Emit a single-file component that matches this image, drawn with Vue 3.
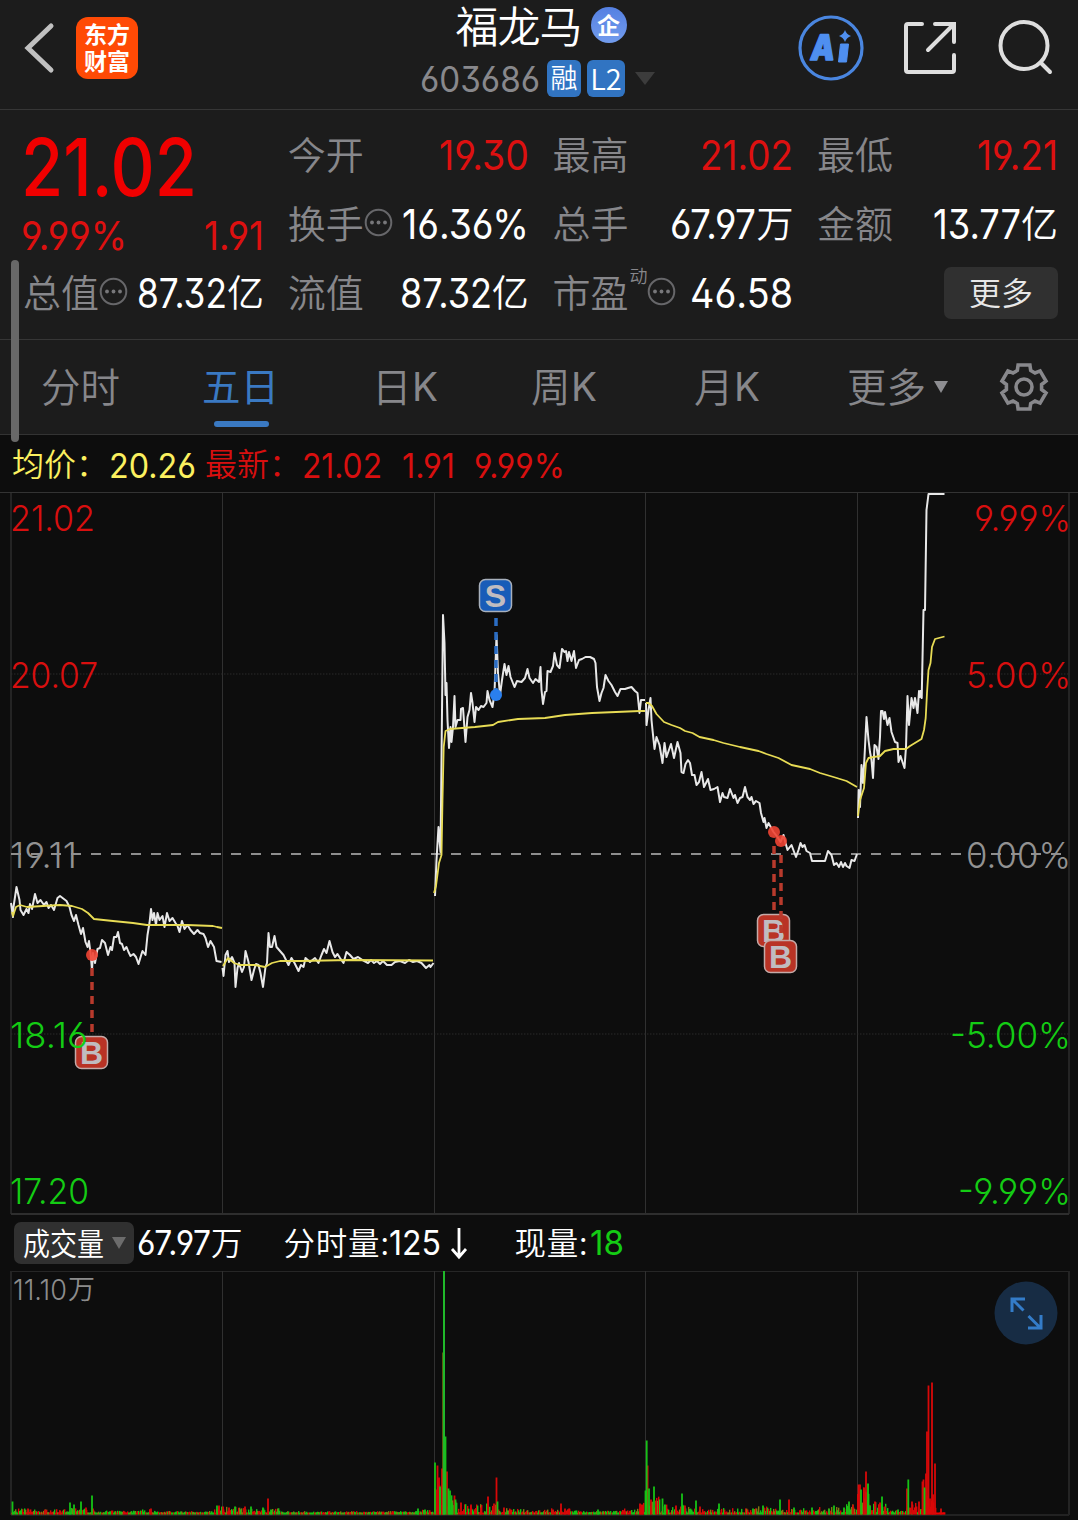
<template>
    <div class="page">
        <header class="header">
            <div class="header-left">
                <svg class="back" width="32" height="56" viewBox="0 0 32 56">
                    <path d="M27 6 L4 28 L27 50" />
                </svg>
                <div class="logo"><span>东方</span><span>财富</span></div>
            </div>
            <div class="title">
                <div class="title-name">
                    <span>福龙马</span>
                    <i class="company">企</i>
                </div>
                <div class="title-code">
                    <span class="num" v-fit="120">603686</span>
                    <span class="tag">融</span>
                    <span class="tag tag-l2">L2</span>
                    <svg width="20" height="14" viewBox="0 0 20 14"><path d="M0 0H20L10 13Z" fill="#3c3c3c" /></svg>
                </div>
            </div>
            <div class="header-right">
                <svg width="66" height="66" viewBox="0 0 66 66">
                    <circle cx="33" cy="33" r="31" fill="none" stroke="#4a86e0" stroke-width="3.2" />
                    <text class="ai" x="13" y="45.500" textLength="24" lengthAdjust="spacingAndGlyphs">A</text>
                    <path d="M42.500 29H50.500L48.500 47H40.500Z" fill="#4f8ff0" stroke="#4f8ff0" stroke-linejoin="round" />
                    <path d="M47 15Q48.500 19.500 53 21Q48.500 22.500 47 27Q45.500 22.500 41 21Q45.500 19.500 47 15Z" fill="#4f8ff0" />
                </svg>
                <svg class="line-icon" width="56" height="56" viewBox="0 0 56 56">
                    <path d="M20 4H6Q4 4 4 6V50Q4 52 6 52H50Q52 52 52 50V35M33 4H52V22M51 5L26 30" />
                </svg>
                <svg class="line-icon" width="58" height="58" viewBox="0 0 58 58">
                    <circle cx="28" cy="26.500" r="23.500" />
                    <path d="M44.500 43.500L54 53" />
                </svg>
            </div>
        </header>

        <section class="quote">
            <div class="price">
                <div class="price-big num" v-fit="176">21.02</div>
                <div class="price-diff">
                    <span class="num" v-fit="106">9.99%</span>
                    <span class="num" v-fit="60">1.91</span>
                </div>
            </div>
            <div v-for="item in quotes" :key="item.label" class="cell">
                <span class="cell-label">{{ item.label }}</span>
                <sup v-if="item.sup">{{ item.sup }}</sup>
                <svg v-if="item.tip" class="tip" :class="{ 'tip-sup': item.sup }" width="29" height="29" viewBox="0 0 29 29">
                    <circle cx="14.500" cy="14.500" r="12.800" fill="none" stroke="#67676a" stroke-width="2" />
                    <circle v-for="x in [8, 14.5, 21]" :key="x" :cx="x" cy="14.500" r="1.900" fill="#77777a" />
                </svg>
                <span class="cell-value" :class="{ up: item.up }">
                    <span class="num" v-fit="item.width">{{ item.value }}</span>
                    <span v-if="item.unit" class="unit">{{ item.unit }}</span>
                </span>
            </div>
            <button class="more">更多</button>
        </section>

        <nav class="tabs">
            <span
                v-for="tab in tabs"
                :key="tab.name"
                class="tab"
                :class="{ active: tab.name === '五日' }"
                :style="{ width: tab.width + 'px' }"
            >
                {{ tab.name }}<b v-if="tab.k" class="num" v-fit="26">K</b>
                <svg v-if="tab.arrow" width="14" height="12" viewBox="0 0 14 12"><path d="M0 0H14L7 12Z" /></svg>
            </span>
            <svg class="gear" width="50" height="50" viewBox="-25 -25 50 50">
                <path :d="gearPath" />
                <circle r="8" />
            </svg>
        </nav>

        <div class="info">
            <span class="info-label avg">均价：</span>
            <span class="num avg info-avg" v-fit="87">20.26</span>
            <span class="info-label">最新：</span>
            <span class="num info-last" v-fit="80">21.02</span>
            <span class="num info-diff" v-fit="53">1.91</span>
            <span class="num" v-fit="91">9.99%</span>
        </div>

        <svg class="chart" width="1078" height="723" viewBox="0 492 1078 723">
            <path d="M0 492.500H1078" stroke="#333" />
            <path d="M11 493V1214M1069 493V1214" stroke="#242424" stroke-width="2" />
            <path d="M222.500 493V1214M434.500 493V1214M645.500 493V1214M857.500 493V1214" stroke="#303030" />
            <path d="M11 1214H1069" stroke="#2e2e2e" stroke-width="2" />
            <path d="M11 674H1069M11 1034H1069" stroke="#2a2a2a" stroke-dasharray="1.500 1.500" />
            <path d="M11 854H1062" stroke="#8e8e8e" stroke-width="2" stroke-dasharray="10 10" />
            <polyline v-for="(line, i) in prices" :key="'p' + i" class="line-price" :points="line" />
            <polyline v-for="(line, i) in averages" :key="'a' + i" class="line-avg" :points="line" />
            <g v-for="m in marks" :key="m.x" :class="'mark-' + m.type">
                <path class="mark-line" :d="`M${m.x} ${m.from}V${m.to}`" />
                <circle :cx="m.x" :cy="m.dot" r="6" />
                <rect :x="m.bx" :y="m.by" width="32" height="32" rx="6" />
                <text :x="m.bx + 16" :y="m.by + 27.5" text-anchor="middle">{{ m.type }}</text>
            </g>
            <text
                v-for="a in axis"
                :key="a.text"
                class="axis"
                :x="a.x"
                :y="a.y"
                :fill="a.color"
                :textLength="a.w"
                lengthAdjust="spacingAndGlyphs"
            >{{ a.text }}</text>
        </svg>

        <div class="vol-bar">
            <span class="chip">
                <span class="chip-text" v-fit="81">成交量</span>
                <svg width="14" height="13" viewBox="0 0 14 13"><path d="M0 0H14L7 12Z" fill="#6c6c6c" /></svg>
            </span>
            <span class="num" v-fit="74">67.97</span>
            <span class="vol-unit">万</span>
            <span class="vol-label">分时量:</span>
            <span class="num" v-fit="52">125</span>
            <svg class="down" width="18" height="34" viewBox="0 0 18 34">
                <path d="M9 2V31M2 23L9 31L16 23" />
            </svg>
            <span class="vol-label now">现量:</span>
            <span class="num down-color" v-fit="34">18</span>
        </div>

        <div class="volume">
            <svg width="1078" height="249" viewBox="0 1271 1078 249">
                <path d="M11 1271.500H1069" stroke="#262626" />
                <path d="M11 1271V1515M1069 1271V1515" stroke="#242424" stroke-width="2" />
                <path d="M222.500 1271V1515M434.500 1271V1515M645.500 1271V1515M857.500 1271V1515" stroke="#303030" />
                <path d="M11 1515H1069" stroke="#222" stroke-width="2" />
                <rect
                    v-for="(b, i) in bars"
                    :key="i"
                    :x="b.x"
                    :y="1514.5 - b.h"
                    :width="b.w"
                    :height="b.h"
                    :fill="b.color"
                />
                <text class="vol-max" x="13" y="1300" textLength="54" lengthAdjust="spacingAndGlyphs">11.10</text>
                <text class="vol-max-unit" x="68" y="1299">万</text>
            </svg>
            <svg class="expand" width="64" height="64" viewBox="0 0 64 64">
                <circle cx="32" cy="32" r="31.500" />
                <path d="M18 31V18H31M19 19L29.500 29.500M34.500 35L46 46.500M47 34V47H34" />
            </svg>
        </div>

        <div class="scrollbar"></div>
    </div>
</template>

<script setup>
    // squeezes a piece of text to the given width and keeps the flow in step
    const vFit = {
        mounted(el, { value }) {
            el.style.display = 'inline-block'
            const natural = el.getBoundingClientRect().width
            el.style.transformOrigin = 'left center'
            el.style.transform = `scaleX(${value / natural})`
            el.style.marginRight = value - natural + (parseFloat(getComputedStyle(el).marginRight) || 0) + 'px'
        },
    }

    const quotes = [
        { label: '今开', value: '19.30', width: 90, up: true },
        { label: '最高', value: '21.02', width: 93, up: true },
        { label: '最低', value: '19.21', width: 81, up: true },
        { label: '换手', value: '16.36%', width: 127, tip: true },
        { label: '总手', value: '67.97', width: 86, unit: '万' },
        { label: '金额', value: '13.77', width: 88, unit: '亿' },
        { label: '总值', value: '87.32', width: 90, unit: '亿', tip: true },
        { label: '流值', value: '87.32', width: 92, unit: '亿' },
        { label: '市盈', value: '46.58', width: 103, sup: '动', tip: true },
    ]

    const tabs = [
        { name: '分时', width: 161 },
        { name: '五日', width: 170 },
        { name: '日', k: true, width: 159 },
        { name: '周', k: true, width: 163 },
        { name: '月', k: true, width: 153 },
        { name: '更多', arrow: true, width: 152 },
    ]

    const gearPath = (() => {
        const pts = []
        for (let i = 0; i < 6; i++) {
            const base = i * 60 - 90
            for (const [r, a] of [[17.8, -22], [22.8, -15], [22.8, 15], [17.8, 22]]) {
                const t = ((base + a) * Math.PI) / 180
                pts.push((r * Math.cos(t)).toFixed(1) + ' ' + (r * Math.sin(t)).toFixed(1))
            }
        }
        return 'M' + pts.join('L') + 'Z'
    })()

    const RED = '#d80f0f'
    const GREEN = '#14cc14'
    const GREY = '#929292'

    const axis = [
        { text: '21.02', x: 10, y: 531, w: 85, color: RED },
        { text: '20.07', x: 10, y: 688, w: 88, color: RED },
        { text: '19.11', x: 10, y: 868, w: 67, color: GREY },
        { text: '18.16', x: 10, y: 1048, w: 78, color: GREEN },
        { text: '17.20', x: 10, y: 1204, w: 79, color: GREEN },
        { text: '9.99%', x: 974, y: 531, w: 97, color: RED },
        { text: '5.00%', x: 966, y: 688, w: 105, color: RED },
        { text: '0.00%', x: 966, y: 868, w: 105, color: GREY },
        { text: '-5.00%', x: 950, y: 1048, w: 121, color: GREEN },
        { text: '-9.99%', x: 958, y: 1204, w: 113, color: GREEN },
    ]

    const marks = [
        { type: 'S', x: 496, from: 618, to: 692, dot: 695, bx: 479.5, by: 579.5 },
        { type: 'B', x: 92, from: 968, to: 1034, dot: 955, bx: 75.5, by: 1036.5 },
        { type: 'B', x: 774, from: 846, to: 912, dot: 832, bx: 757.5, by: 914.5 },
        { type: 'B', x: 781, from: 855, to: 938, dot: 841, bx: 764.5, by: 940.5 },
    ]

    const prices = [
        '11,903 13,917 13.5,907 16.5,887 19.5,900 20.5,910 23.5,915 26.5,909 28.5,913 30,904 32,909 35,894 37.5,903 40.5,900 44,905 46.5,902 48.5,908 51,905 54,910 57.5,898 60,896 66.5,901 69.5,907 71.5,915 74,921 76,915 78.5,925 81,934 83,928 85.5,942 87.5,947 89,941 90.5,953 92,970 93,953 95,963 97.5,949 100,948 102,940 105,943 108,955 110.5,947 112,950 114,937 116.5,937 118,932 120,943 122,944 124,950 126.5,947 128.5,952 130.5,956 133.5,954 136,957 138.5,964 141.5,954 142.5,951 145.5,955 147.5,935 149.5,923 151,909 152.5,920 154,913 156,925 157.5,913 159.5,920 162.5,916 164.5,927 167,913 169.5,921 172.5,918 175.5,923 177.5,926 179.5,932 182,921 184.5,929 187.5,925 190.5,930 194,934 197.5,930 200,933 203.5,934 205.5,938 208,947 210.5,941 214,947 216.5,961 221.5,962',
        '222.5,968 223.5,976 225.5,955 227.5,951 229,962 232,957 234.5,963 235.5,987 237.5,968 239,963 242,972 244,967 245.5,951 248.5,962 251.5,980 254,970 256,964 258.5,965 260.5,973 263,987 265.5,967 267,963 268.5,933 270,947 272,947 274.5,936 276.5,947 280,951 283.5,955 288.5,965 291.5,958 294.5,963 298.5,971 301,965 303.5,967 305.5,958 310,962 315,958 318.5,963 321.5,955 324,949 326.5,953 329.5,941 332.5,952 335,957 337.5,954 340,958 343.5,963 346.5,952 350,955 353.5,959 358,957 362.5,960 368,963 371,960 374,963 377,961 380,964 383,961 387,965 391.5,965 395,962 400,961 405,963 409,960 413,962 417,961 421.5,963 426,968 429.5,965 430.5,967 433.5,963',
        '435,896 436.5,860 438.5,827 440.5,852 441.5,760 443,615 444.5,643 445.5,695 446.5,683 447.5,720 449,748 450.5,727 451.5,742 453,727 454.5,696 455.5,727 457.5,720 460.5,720 461,709 463,708 465.5,742 467.5,717 469.5,710 471,693 472.5,703 474.5,722 476,707 478.5,710 481,706 483.5,707 486.5,703 487.5,691 489.5,700 492.5,707 494.5,693 496.5,635 498,673 500,695 502,680 504.5,664 506.5,675 508.5,666 510.5,677 512.5,682 514.5,687 517,681 521.5,682 525,678 527.5,669 529.5,678 533,683 535.5,679 539,682 540.5,667 541.5,690 543,704 545,692 546.5,691 547.5,671 550.5,672 553,666 554.5,653 557,665 559.5,668 562,649 564.5,652 566,651 567.5,661 569,652 571.5,661 574,651 576,668 579,660 582,659 585.5,657 590,657 594,659 595.5,663 597,687 599.5,701 601.5,693 603.5,688 605.5,675 608.5,681 611.5,685 615,692 617.5,696 620.5,689 625,689 628,688 631.5,687 635,691 637.5,693 639.5,713 641,700 645,700',
        '646,703 646.5,725 648.5,710 650.5,698 651.5,720 652.5,730 654.5,749 656.5,737 659.5,745 662.5,763 664.5,743 666.5,757 671,744 674,758 677.5,742 680.5,753 681.5,772 683.5,773 685.5,764 688,760 690,763 692,775 694.5,775 696.5,785 699,782 701.5,772 704,787 708,779 710.5,790 714,789 717.5,787 720,802 722.5,793 724,797 727.5,798 730,789 733.5,798 735,795 737.5,803 740,798 742.5,797 745,787 747.5,797 750,800 751.5,797 753.5,804 756,801 759.5,803 761,813 763.5,822 764.5,818 766.5,828 768.5,823 773.5,832 777.5,837 780.5,842 783.5,835 785.5,843 787.5,850 791.5,845 796,857 798.5,850 800.5,843 802.5,847 804.5,845 806.5,851 810,853 812,861 825,861 828,851 831.5,855 834,865 836.5,863 839,867 841,862 843,867 845,863 846.5,866 849.5,868 851.5,860 854.5,861 857,854',
        '858,818 858.7,790 860,807 861.5,765 863,783 864.5,757 866.5,717 868.5,740 870,752 871.5,760 873,778 874.5,745 876.5,747 878.5,759 880,737 881,711 882.5,711 884,719 885,712 887.5,725 889.5,718 891.5,732 895,742 897.5,743 898.5,762 900.5,756 904.5,768 906,747 907.5,696 909,725 911.5,698 913.5,708 915,698 917.5,713 919,691 920,697 920.7,691 921.7,698 923.5,610 925,610 926.5,510 928.5,494 944.5,494',
    ]

    const averages = [
        '12,912 13,916 16,907 20,905 27,907 43,906 60,905 72,906 82,909 88,913 94,919 113,921 133,923 147,925 167,925 187,925 213,926 217,927 222,928',
        '223,966 228,958 234,963 240,965 255,965 265,967 272,963 280,961 300,961 350,960 433,960.5',
        '434,893 436,886 439,863 441.5,855 442.5,800 443.7,747 445.5,731 450,729 462,728 475,727 493,725 498,722 518,719 545,718 565,715 592,713 640,711 645,711',
        '646,703 648.5,703 652,706 656.5,714 664,722 671.5,725 680,728 685,731 692.5,733 699.5,737 713.5,740 723.5,743 740,747 758.5,751 766.5,754 778.5,758 791.5,765 810,769 820,773 833.5,777 846.5,781 857,787',
        '858,816 860,800 864,788 866,763 868.5,758 873.5,757 880,756 885,751 893.5,749 906,749 910,746 921.5,739 924,730 925.7,718 927,693 928.5,670 930.5,663 932,647 935,639 944.5,636.5',
    ]

    // [x from, x to, max height, share of red bars]
    const floors = [
        [11, 25, 6, 0.3], [25, 66, 5, 0.8], [66, 95, 6, 0.4], [95, 135, 3.5, 0.5], [135, 155, 5, 0.7],
        [155, 214, 3, 0.4], [214, 240, 9, 0.7], [240, 280, 6, 0.5], [280, 420, 3, 0.5], [420, 434, 5, 0.7],
        [434, 448, 30, 0.6], [448, 458, 19, 0.4], [458, 480, 11, 0.7], [480, 500, 11, 0.7], [500, 520, 6, 0.5],
        [520, 545, 5, 0.6], [545, 570, 6, 0.8], [570, 620, 3.5, 0.3], [620, 640, 6, 0.6], [640, 645, 12, 0.5],
        [645, 660, 19, 0.4], [660, 690, 10, 0.5], [690, 755, 6, 0.5], [755, 800, 8, 0.4], [800, 845, 7, 0.5],
        [845, 857, 12, 0.5], [857, 870, 28, 0.7], [870, 886, 12, 0.5], [886, 906, 6, 0.4], [906, 922, 14, 0.8],
        [922, 936, 30, 1], [936, 945, 2, 1],
    ]

    const peaks = {
        r: '28,6 45,5 60,4 86,7 93,6 151,6 219,9 223,8 229,7 245,8 268,16 436,25 437.5,49 439,37 442,46 447,43 454.5,19 461,12 471,10 481,7 488,18 494,11 496.5,37 504,7 553,5 561,11 565,6 569,6 640,11 642,10 647.6,49 651,15 656,14 676,9 685,9 700,8 789,15 853,10 858.5,30 860,30 864,27 866,43 875,13 880,12 885,8 907,26 912,13 919,13 922.5,33 923.5,35 926,41 927,83 928.5,129 930,16 932,132 933,20 935,51 941,6',
        g: '12.5,13 70,12 74,10 81,13 92,19 121,3 217,9 235,8 251,8 263,7 271,5 418,6 425,5 435,52 440,28 445.5,78 448.5,26 450,24 452,12 455.5,15 497.5,13 598,5 645.5,24 646.7,74 649,26 654,28 662.5,16 665,10 682,21 696,14 719,11 753,6 763,9 780,15 794,7 812,7 829,6 834,9 844,7 849,13 861,25 868,31 870,9 882,18 898,5 908.3,35 924.5,27',
    }

    const bars = []
    let seed = 7
    const rand = () => {
        seed = (seed * 16807) % 2147483647
        return seed / 2147483647
    }
    for (const [from, to, max, red] of floors) {
        for (let x = from; x < to; x += 1) {
            const h = 1.9 + Math.pow(rand(), 1.6) * (max - 1.4)
            const color = rand() < 0.25 ? '#7f7a12' : rand() < red ? '#d80808' : '#16c216'
            bars.push({ x, h, w: 1.4, color: x > 922 ? '#ee0000' : color })
        }
    }
    for (const [key, list] of Object.entries(peaks)) {
        for (const p of list.split(' ')) {
            const [x, h] = p.split(',').map(Number)
            bars.push({ x: x - 0.9, h, w: 1.8, color: key === 'r' ? '#d80808' : '#16c216' })
        }
    }
    bars.push({ x: 442.3, h: 162, w: 1.2, color: '#7f7a12' })
    bars.push({ x: 443, h: 243.5, w: 2, color: '#20b82a' })
</script>

<style>
    body {
        background: #0d0d0d;
    }
</style>

<style scoped>
    .page {
        position: relative;
        width: 1078px;
        height: 1520px;
        overflow: hidden;
        background: #0d0d0d;
        color: #fff;
        font-family: 'Noto Sans CJK SC', sans-serif;
        font-weight: 350;
    }
    .page svg {
        display: block;
        flex: none;
    }
    .num {
        font-family: Inter, 'Liberation Sans', sans-serif;
        font-feature-settings: 'ss01';
        font-weight: 370;
        white-space: nowrap;
    }
    .header {
        display: grid;
        grid-template-columns: 1fr 236px 1fr;
        height: 109px;
        background: #1c1c1c;
        border-bottom: 1px solid #363636;
    }
    .header-left {
        display: flex;
        align-items: center;
        gap: 20px;
        height: 96px;
        padding-left: 24px;
    }
    .back path {
        fill: none;
        stroke: #c0c0c0;
        stroke-width: 5;
        stroke-linecap: round;
    }
    .logo {
        display: flex;
        flex-direction: column;
        align-items: center;
        justify-content: center;
        width: 62px;
        height: 62px;
        padding-bottom: 2px;
        box-sizing: border-box;
        border-radius: 12px;
        background: #ff4a05;
        font-size: 23px;
        font-weight: 700;
        line-height: 27px;
    }
    .title-name {
        display: flex;
        align-items: center;
        justify-content: center;
        gap: 9px;
        height: 50px;
        padding-left: 4px;
        font-size: 43px;
        letter-spacing: -1px;
        line-height: 46px;
    }
    .title-name span {
        margin-top: -3px;
    }
    .company {
        width: 36px;
        height: 36px;
        border-radius: 50%;
        background: linear-gradient(#5580e2, #729ced);
        font-size: 23px;
        font-style: normal;
        font-weight: 700;
        letter-spacing: 0;
        line-height: 34px;
        text-align: center;
    }
    .title-code {
        display: flex;
        align-items: center;
        height: 57px;
        margin-left: -1px;
        color: #88888c;
        font-size: 35px;
    }
    .tag {
        width: 34px;
        height: 37px;
        margin-left: 7px;
        border-radius: 6px;
        background: #3174c2;
        color: #fff;
        font-size: 27px;
        line-height: 34px;
        text-align: center;
    }
    .tag-l2 {
        width: 38px;
        margin: 0 10px 0 6px;
        font-size: 29px;
        line-height: 34px;
    }
    .header-right {
        display: flex;
        align-items: center;
        justify-content: flex-end;
        height: 96px;
        padding-right: 24px;
        gap: 38px;
    }
    .ai {
        fill: #4f8ff0;
        stroke: #4f8ff0;
        stroke-width: 1.5;
        stroke-linejoin: round;
        font: 900 35px Inter, sans-serif;
        transform: skewX(-7deg);
        transform-box: fill-box;
        transform-origin: center;
    }
    .line-icon {
        fill: none;
        stroke: #dedede;
        stroke-width: 4;
        stroke-linecap: round;
    }
    .quote {
        display: grid;
        grid-template-columns: repeat(4, 240px);
        grid-template-rows: repeat(3, 69px);
        column-gap: 24.7px;
        height: 207px;
        padding: 11px 0 11px 24px;
        background: #1c1c1c;
        border-bottom: 1px solid #363636;
    }
    .price {
        grid-row: span 2;
        color: #f00000;
    }
    .price-big {
        margin: 10px 0 0 -3px;
        font-size: 80px;
        font-weight: 520;
        line-height: 72px;
    }
    .price-diff {
        display: flex;
        justify-content: space-between;
        margin: -2px 0 0 -3px;
        color: #dd1010;
        font-size: 40px;
        line-height: 69px;
    }
    .cell {
        display: flex;
        align-items: center;
        color: #87878b;
        line-height: 69px;
    }
    .cell-label {
        font-size: 38px;
        margin-left: -1px;
        transform: translateY(-3px);
    }
    .cell sup {
        align-self: flex-start;
        margin-left: 1px;
        font-size: 18px;
        line-height: 32px;
    }
    .tip {
        margin-top: -5px;
    }
    .cell-value {
        display: flex;
        align-items: center;
        margin-left: auto;
        color: #fff;
        font-size: 40.5px;
    }
    .cell-value.up {
        color: #dd1010;
    }
    .unit {
        font-size: 37px;
        transform: translateY(-2px);
    }
    .more {
        justify-self: end;
        align-self: center;
        width: 114px;
        height: 52px;
        margin: -2px 0 0;
        padding: 0 0 3px;
        border: 0;
        border-radius: 7px;
        background: #303030;
        color: #e8e8e8;
        font: 350 32px 'Noto Sans CJK SC', sans-serif;
    }
    .tabs {
        display: flex;
        align-items: center;
        height: 94px;
        padding-left: 41px;
        background: #1c1c1c;
        border-bottom: 1px solid #333;
        color: #87878b;
        font-size: 39.5px;
    }
    .tab {
        position: relative;
        display: flex;
        align-items: center;
        flex: none;
        height: 94px;
        padding-bottom: 6px;
        box-sizing: border-box;
    }
    .tab .num {
        padding-top: 5px;
    }
    .tab svg {
        margin: 5px 0 0 8px;
        fill: #8d8d91;
    }
    .active {
        color: #3a79c2;
        font-size: 38.5px;
        font-weight: 400;
    }
    .active::after {
        content: '';
        position: absolute;
        left: 12px;
        bottom: 7px;
        width: 55px;
        height: 6px;
        border-radius: 3px;
        background: #3a79c2;
    }
    .gear {
        fill: none;
        stroke: #88888c;
        stroke-width: 3.6;
    }
    .info {
        display: flex;
        align-items: center;
        height: 57px;
        padding: 0 0 0 12px;
        color: #d80f0f;
        font-size: 34.5px;
        line-height: 57px;
    }
    .info .num {
        padding-top: 3px;
    }
    .info-label {
        width: 97px;
        font-size: 32px;
        transform: translateY(-1px);
    }
    .avg {
        color: #fbf05f;
    }
    .info-avg {
        margin-right: 9px;
    }
    .info-last {
        margin-right: 20px;
    }
    .info-diff {
        margin-right: 19px;
    }
    .line-price,
    .line-avg {
        fill: none;
        stroke: #e8e8e8;
        stroke-width: 2;
        stroke-linejoin: round;
    }
    .line-avg {
        stroke: #e8dc55;
        stroke-width: 1.8;
    }
    .axis {
        font: 340 36px Inter, sans-serif;
        font-feature-settings: 'ss01';
    }
    .mark-line {
        stroke: #b83a2c;
        stroke-width: 3.5;
        stroke-dasharray: 8 6;
    }
    .mark-B circle {
        fill: #ee4433;
        opacity: 0.9;
    }
    .mark-B rect {
        fill: #b93325;
        stroke: #c4aaa8;
        stroke-width: 1.5;
    }
    .mark-B text,
    .mark-S text {
        fill: #c0bcc0;
        font: 700 32px 'Liberation Sans', sans-serif;
    }
    .mark-S .mark-line {
        stroke: #2b6dc4;
    }
    .mark-S circle {
        fill: #2a7fee;
    }
    .mark-S rect {
        fill: #185cb8;
        stroke: #a8b0bc;
        stroke-width: 1.5;
    }
    .vol-bar {
        display: flex;
        align-items: center;
        height: 56px;
        padding-left: 14px;
        font-size: 33.5px;
        line-height: 56px;
    }
    .chip {
        display: flex;
        align-items: center;
        width: 120px;
        height: 42px;
        margin-right: 3px;
        padding-left: 9px;
        box-sizing: border-box;
        border-radius: 7px;
        background: #303030;
        font-size: 31px;
        line-height: 40px;
    }
    .chip-text {
        margin: -3px 8px 0 0;
        white-space: nowrap;
    }
    .vol-unit,
    .vol-label {
        font-size: 31.5px;
        white-space: nowrap;
        transform: translateY(-2px);
    }
    .vol-label {
        width: 105px;
        margin-left: 41px;
        letter-spacing: 0.8px;
    }
    .vol-label.now {
        width: 75px;
        margin-left: 47px;
    }
    .down {
        margin-left: 9px;
        fill: none;
        stroke: #fff;
        stroke-width: 2.8;
    }
    .down-color {
        color: #14cc14;
    }
    .volume {
        position: relative;
        height: 249px;
    }
    .vol-max,
    .vol-max-unit {
        fill: #8c8c8c;
        font: 340 28.5px Inter, sans-serif;
    }
    .vol-max-unit {
        font: 350 27px 'Noto Sans CJK SC', sans-serif;
    }
    .expand {
        position: absolute;
        top: 10px;
        right: 20px;
    }
    .expand circle {
        fill: #172c44;
    }
    .expand path {
        fill: none;
        stroke: #347cc8;
        stroke-width: 3;
    }
    .scrollbar {
        position: absolute;
        top: 260px;
        left: 11px;
        width: 8px;
        height: 182px;
        border-radius: 4px;
        background: #686868;
    }
</style>
